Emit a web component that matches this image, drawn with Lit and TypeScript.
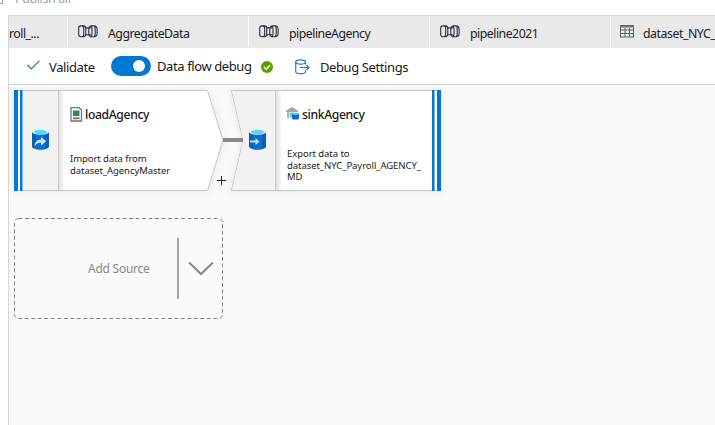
import { LitElement, html, svg, css } from "lit";
import { customElement } from "lit/decorators.js";

const pipelineIcon = html`<svg class="pipe" width="20" height="13" viewBox="0 0 20 13" fill="none" stroke="#2b3038" stroke-width="1.1">
  <rect x=".7" y=".9" width="5" height="10.8" rx="2.2"/><path d="M4 .9h1.5c1.6 0 2.3 1.200 2.300 2.600v5.600c0 1.400-.7 2.600-2.300 2.600H4"/>
  <path d="M7.500 2.900H13M7.500 9.800H13"/>
  <path d="M12.500 .9h3.300c2 0 3.300 1.300 3.300 3.300v4.300c0 2-1.300 3.200-3.300 3.200h-3.300c1.100-.6 1.500-1.600 1.500-2.700V3.600c0-1.100-.4-2.100-1.500-2.700zM12.500 .9c-1.200.5-1.700 1.400-1.700 2.600v5.600c0 1.200.5 2.100 1.700 2.600M16.300 1.200c.7.7.9 1.500.9 2.600v5c0 1.100-.2 2-.9 2.700"/></svg>`;

const tableIcon = html`<svg class="pipe" width="14" height="13" viewBox="0 0 14 13"><rect x=".5" y=".5" width="13" height="11.500" fill="#e4f0f8" stroke="#6b5a4c"/><path d="M0 1.500h14" stroke="#77716c" stroke-width="2"/><path d="M1 5h12M1 8.500h12M5 3v9M9.500 3v9" stroke="#6b5a4c"/></svg>`;

const cylinder = (arrow: unknown) => html`<svg width="17" height="21" viewBox="0 0 17 21">
  <path d="M0 2.800v14.800c0 1.800 3.800 3 8.500 3s8.500-1.200 8.500-3V2.800z" fill="#0a5fb8"/>
  <path d="M4 5v15.300c1.300.2 2.900.3 4.500.3s3.200-.1 4.500-.3V5z" fill="#0f6fce"/>
  <ellipse cx="8.500" cy="2.900" rx="8.500" ry="2.800" fill="#d9eef5"/><ellipse cx="8.500" cy="3.100" rx="6.500" ry="2" fill="#3fdcf5"/>${arrow}</svg>`;

@customElement("app-root")
export class AppRoot extends LitElement {
  static styles = css`
    :host { display: block; height: 425px; overflow: hidden; background: #fff; color: #1b1a19; font: 13px/18px "Noto Sans", "Open Sans", sans-serif; }
    * { box-sizing: border-box; }
    svg { display: block; flex: none; }
    span { white-space: nowrap; }
    .top { height: 15px; overflow: hidden; display: flex; color: #a19f9d; }
    .sq { flex: none; width: 8px; height: 10px; margin: -6px 12px 0 -5px; border: 1px solid #a19f9d; }
    .publish { margin-top: -10px; font-size: 12.300px; letter-spacing: -.3px; }
    .main { margin-left: 8px; height: 410px; border-left: 1px solid #d6d6d6; border-top: 1px solid #dcdcdc; display: flex; flex-direction: column; }
    .tabs { display: flex; height: 32px; background: #e9e9e9; overflow: hidden; flex: none; }
    .tab { width: 181px; flex: none; display: flex; border-right: 1px solid #fff; padding: 8px 0 0 10px; height: 31px; }
    .tab span { font-size: 12.300px; letter-spacing: -.5px; margin-top: 1px; }
    .tab .pipe { margin: 1px 10px 0 0; }
    .tab.first { width: 59px; padding-left: 0; }
    .tab.table { width: 105px; border: 0; padding-left: 9px; }
    .tab.table .pipe { margin-right: 9px; }
    .tab.table span { letter-spacing: -.45px; }
    .bar { height: 37px; flex: none; display: flex; border-bottom: 1px solid #d6d6d6; padding: 8px 0 0 18px; font-size: 13px; }
    .bar span { margin-top: 2px; letter-spacing: -.4px; }
    .check { margin: 4px 9px 0 0; }
    .validate { width: 46px; }
    .toggle { width: 40px; height: 20px; border-radius: 10px; background: #0078d4; margin: 0 6px 0 16px; padding: 4px 6px; display: flex; justify-content: flex-end; }
    .knob { width: 12px; height: 12px; border-radius: 50%; background: #fff; }
    .bar .flow { margin-top: 1px; width: 95px; }
    .ok { margin: 5px 22px 0 9px; }
    .out { margin: 3px 10px 0 0; }
    .canvas { flex: 1; background: #fafafa; padding: 5px 0 0 5px; }
    .graph { display: flex; height: 101px; }
    .node { position: relative; display: flex; height: 101px; }
    .shape { position: absolute; left: 0; top: 0; overflow: visible; filter: drop-shadow(0 0 4px rgba(0,0,0,.08)); }
    .node > div { position: relative; }
    .load, .sink { width: 210px; }
    .side { width: 46px; padding: 39px 0 0 18px; }
    .body { padding: 16px 0 0 10px; width: 160px; }
    .sink .body { padding-left: 8px; }
    .title { display: flex; font-size: 12.200px; font-weight: 500; gap: 2px; height: 20px; }
    .title span { letter-spacing: -.38px; }
    .sink .title { gap: 3px; }
    .sink .title svg { margin-left: 1px; }
    .desc { font-size: 9.500px; line-height: 11.500px; letter-spacing: -.06px; }
    .load .desc { margin-top: 27px; }
    .sink .desc { margin: 22px 0 0 2px; }
    .desc span { display: block; }
    .link { width: 7px; position: relative; }
    .link i { position: absolute; left: -1px; top: 48px; width: 20px; height: 4px; background: #8a8886; z-index: 2; }
    .link svg { position: absolute; left: -7px; top: 86px; z-index: 2; }
    .add { margin-top: 27px; width: 209px; height: 101px; display: flex; align-items: center; position: relative; color: #8a8886; font-size: 12px; }
    .add .dash { position: absolute; left: 0; top: 0; }
    .add span { width: 163px; padding-left: 74px; letter-spacing: -.25px; }
    .rule { width: 2px; height: 61px; background: #a8a6a4; margin-right: 9px; }
  `;

  tab(name: string) {
    return html`<div class="tab">${pipelineIcon}<span>${name}</span></div>`;
  }

  render() {
    return html`
      <div class="top"><div class="sq"></div><span class="publish">Publish all</span></div>
      <div class="main">
        <div class="tabs">
          <div class="tab first"><span>roll_...</span></div>
          ${["AggregateData", "pipelineAgency", "pipeline2021"].map((n) => this.tab(n))}
          <div class="tab table">${tableIcon}<span>dataset_NYC_</span></div>
        </div>
        <div class="bar">
          <svg class="check" width="13" height="10" viewBox="0 0 13 10" fill="none" stroke="#1f6fc6" stroke-width="1.200"><path d="M.5 5l3.800 3.800L12.500.6"/></svg>
          <span class="validate">Validate</span>
          <div class="toggle"><div class="knob"></div></div>
          <span class="flow">Data flow debug</span>
          <svg class="ok" width="12" height="12" viewBox="0 0 12 12"><circle cx="6" cy="6" r="6" fill="#57a300"/><path d="M3 6l2.200 2.200L9 4.300" fill="none" stroke="#fff" stroke-width="1.600"/></svg>
          <svg class="out" width="15" height="16" viewBox="0 0 15 16" fill="none" stroke="#2b73d6" stroke-width="1.200"><ellipse cx="5.600" cy="3" rx="4.900" ry="2.200"/><path d="M.7 3v9.500c0 1.300 2.200 2.200 4.900 2.200s4.900-.9 4.900-2.200v-1M10.500 3v2.500M5 8.500h9M11.500 6l2.500 2.500L11.500 11"/></svg>
          <span class="settings">Debug Settings</span>
        </div>
        <div class="canvas">
          <div class="graph">
            <div class="node load">
              <svg class="shape" width="210" height="101"><defs><linearGradient id="fade"><stop stop-color="#000" stop-opacity=".12"/><stop offset="1" stop-color="#000" stop-opacity="0"/></linearGradient></defs><path d="M.5.500H193.500L209 50.500 193.500 100.500H.500z" fill="#fff" stroke="#c8c6c4"/><path d="M9 1h36v99H9z" fill="#f2f2f2"/><path d="M45 1h6v99h-6z" fill="url(#fade)"/><path d="M44.500 1v99" stroke="#c8c8c8"/><path d="M0 0h4v101H0zM6 0h2.500v101H6z" fill="#0078d4"/></svg>
              <div class="side">${cylinder(svg`<path d="M2.500 17.500c.3-5 3-6.700 6.500-6.700V8l5.300 4.300L9 16.500v-2.800c-3 0-4.800 1-6.500 3.800z" fill="#c5e3fa"/>`)}</div>
              <div class="body">
                <div class="title"><svg width="13" height="16" viewBox="0 0 13 16"><path d="M1 1.700h8l2.500 2.300v11H1z" fill="#fff" stroke="#6d7773" stroke-width="1.300"/><rect x="3" y="4.500" width="6.500" height="5.500" fill="#2c8c58"/><path d="M3 12.300h6.500" stroke="#777" stroke-width="2"/></svg><span>loadAgency</span></div>
                <div class="desc"><span>Import data from</span><span>dataset_AgencyMaster</span></div>
              </div>
            </div>
            <div class="link"><i></i><svg width="9" height="9"><path d="M0 4.500h9M4.500 0v9" stroke="#222" stroke-width="1"/></svg></div>
            <div class="node sink">
              <svg class="shape" width="210" height="101"><defs><linearGradient id="fade2"><stop stop-color="#000" stop-opacity=".12"/><stop offset="1" stop-color="#000" stop-opacity="0"/></linearGradient></defs><path d="M.5.500H209.500V100.500H.500L12 50.500z" fill="#fff" stroke="#c8c6c4"/><path d="M1 1h43v99H1L12.500 50.500z" fill="#f2f2f2"/><path d="M45 1h6v99h-6z" fill="url(#fade2)"/><path d="M44.500 1v99" stroke="#c8c8c8"/><path d="M201 0h2.500v101H201zM206 0h4v101h-4z" fill="#0078d4"/></svg>
              <div class="side">${cylinder(svg`<path d="M1 11.500h5.500V9l4 3.500-4 3.500v-2.500H1z" fill="#c5e3fa"/>`)}</div>
              <div class="body">
                <div class="title"><svg width="13" height="16" viewBox="0 0 13 16"><path d="M0 4.500L6 1l6 3.500v1.500H0z" fill="#a9a9a9"/><path d="M1 6h2v6H1z" fill="#b5b5b5"/><path d="M3.500 6.500h5v5h-5z" fill="#50d3ee"/><rect x="6" y="7" width="7" height="6.500" rx="1.500" fill="#0f69c4"/><ellipse cx="9.500" cy="7.700" rx="3.300" ry="1" fill="#4fdcf4"/></svg><span>sinkAgency</span></div>
                <div class="desc"><span>Export data to</span><span>dataset_NYC_Payroll_AGENCY_</span><span>MD</span></div>
              </div>
            </div>
          </div>
          <div class="add">
            <svg class="dash" width="209" height="101"><rect x=".5" y=".5" width="208" height="100" rx="4" fill="none" stroke="#8a8886" stroke-dasharray="4 2.500"/></svg>
            <span>Add Source</span><div class="rule"></div>
            <svg width="26" height="15" viewBox="0 0 26 15"><path d="M1 1.500L13 13 25 1.500" fill="none" stroke="#8a8886" stroke-width="2"/></svg>
          </div>
        </div>
      </div>`;
  }
}
